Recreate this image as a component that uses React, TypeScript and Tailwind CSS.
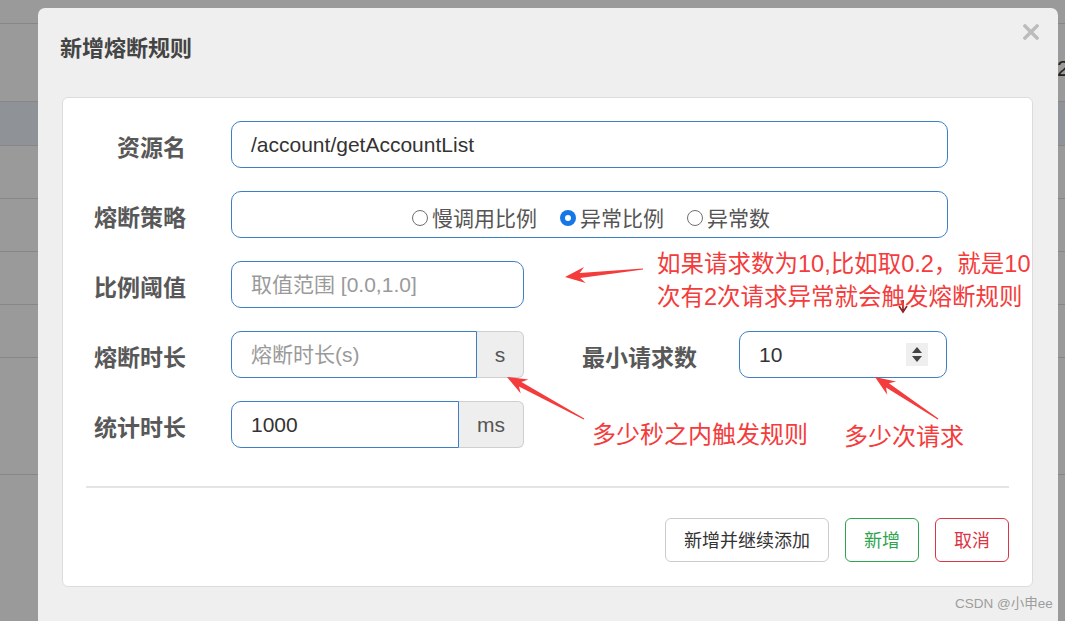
import React from 'react';

const font = "font-['Liberation_Sans','Noto_Sans_CJK_SC',sans-serif]";

type Pt = [number, number];

const Arrow = ({ tail, tip }: { tail: Pt; tip: Pt }) => {
  const dx = tip[0] - tail[0];
  const dy = tip[1] - tail[1];
  const len = Math.hypot(dx, dy);
  const ux = dx / len;
  const uy = dy / len;
  const nx = -uy;
  const ny = ux;
  const headLen = 20;
  const headW = 8;
  const neck: Pt = [tip[0] - ux * headLen * 0.75, tip[1] - uy * headLen * 0.75];
  const base: Pt = [tip[0] - ux * headLen, tip[1] - uy * headLen];
  const pts: Pt[] = [
    [tail[0] + nx * 0.6, tail[1] + ny * 0.6],
    [neck[0] + nx * 2.6, neck[1] + ny * 2.6],
    [base[0] + nx * headW, base[1] + ny * headW],
    tip,
    [base[0] - nx * headW, base[1] - ny * headW],
    [neck[0] - nx * 2.6, neck[1] - ny * 2.6],
    [tail[0] - nx * 0.6, tail[1] - ny * 0.6],
  ];
  return <polygon points={pts.map((p) => p.join(',')).join(' ')} fill="#f43c3c" />;
};

const Label = ({ children }: { children: React.ReactNode }) => (
  <div className="w-[123px] shrink-0 mt-[8px] text-right text-[23px] font-bold text-[#585858] leading-none">{children}</div>
);

const Radio = ({ checked, label }: { checked?: boolean; label: string }) => (
  <div className="flex items-center gap-[4px]">
    {checked ? (
      <span className="w-[16px] h-[16px] rounded-full bg-[#1677e6] flex items-center justify-center">
        <span className="w-[6px] h-[6px] rounded-full bg-white" />
      </span>
    ) : (
      <span className="w-[16px] h-[16px] rounded-full border-[1.5px] border-[#6f6f6f] bg-white" />
    )}
    <span className="text-[21px] text-[#555] leading-none">{label}</span>
  </div>
);

export default function App() {
  const rowLines = [24, 78, 44, 53, 53, 53, 53, 117];
  return (
    <div className={`relative w-[1065px] h-[621px] overflow-hidden bg-[#9a9a9a] ${font}`}>
      {/* page behind the dialog */}
      <div className="flex flex-col">
        {rowLines.map((h, i) => (
          <div
            key={i}
            style={{ height: h }}
            className={`border-b border-[#878787] ${i === 2 ? 'bg-[#8f9296]' : ''}`}
          />
        ))}
      </div>
      <div className="absolute left-[1057px] top-[58px] text-[22px] text-[#222] leading-none">2</div>

      {/* dialog */}
      <div className="absolute left-[38px] top-[8px] w-[1020px] h-[660px] bg-[#efefef] rounded-t-[7px]">
        <div className="relative h-[89px] px-[22px] pt-[24px]">
          <h2 className="text-[22px] font-bold text-[#444] leading-[34px]">新增熔断规则</h2>
          <svg className="absolute right-[19px] top-[16px]" width="16" height="16" viewBox="0 0 16 16">
            <path d="M2 2 L14 14 M14 2 L2 14" stroke="#bcbcbc" strokeWidth="3.4" strokeLinecap="square" />
          </svg>
        </div>

        <div className="ml-[24px] w-[971px] h-[490px] bg-white border border-[#dcdcdc] rounded-[6px] pt-[23px]">
          <div className="flex flex-col gap-[23px]">
            <div className="flex items-center h-[47px]">
              <Label>资源名</Label>
              <div className="ml-[45px] w-[717px] h-[47px] border border-[#3d7fc2] rounded-[10px] px-[19px] flex items-center text-[21px] text-[#333]">
                /account/getAccountList
              </div>
            </div>

            <div className="flex items-center h-[47px]">
              <Label>熔断策略</Label>
              <div className="ml-[45px] w-[717px] h-[47px] border border-[#3d7fc2] rounded-[10px] flex items-center justify-center gap-[23px] pl-[3px] pt-[7px]">
                <Radio label="慢调用比例" />
                <Radio checked label="异常比例" />
                <Radio label="异常数" />
              </div>
            </div>

            <div className="flex items-center h-[47px]">
              <Label>比例阈值</Label>
              <div className="ml-[45px] w-[293px] h-[47px] border border-[#3d7fc2] rounded-[10px] px-[19px] flex items-center text-[21px] text-[#9a9a9a]">
                取值范围 [0.0,1.0]
              </div>
            </div>

            <div className="flex items-center h-[47px]">
              <Label>熔断时长</Label>
              <div className="ml-[45px] flex h-[47px]">
                <div className="w-[246px] border border-[#3d7fc2] rounded-l-[10px] px-[19px] flex items-center text-[21px] text-[#9a9a9a]">
                  熔断时长(s)
                </div>
                <div className="w-[47px] bg-[#eeeeee] border border-l-0 border-[#cfcfcf] rounded-r-[6px] flex items-center justify-center text-[21px] text-[#555]">
                  s
                </div>
              </div>
              <div className="ml-[58px] mt-[8px] text-[23px] font-bold text-[#585858] leading-none">最小请求数</div>
              <div className="ml-[42px] w-[208px] h-[47px] border border-[#3d7fc2] rounded-[10px] pl-[19px] pr-[18px] flex items-center justify-between text-[21px] text-[#333]">
                <span>10</span>
                <span className="w-[22px] h-[23px] bg-[#efefef] flex flex-col items-center justify-center gap-[3px]">
                  <svg width="10" height="6" viewBox="0 0 10 6"><path d="M0 6 L5 0 L10 6 Z" fill="#444" /></svg>
                  <svg width="10" height="6" viewBox="0 0 10 6"><path d="M0 0 L5 6 L10 0 Z" fill="#444" /></svg>
                </span>
              </div>
            </div>

            <div className="flex items-center h-[47px]">
              <Label>统计时长</Label>
              <div className="ml-[45px] flex h-[47px]">
                <div className="w-[228px] border border-[#3d7fc2] rounded-l-[10px] px-[19px] flex items-center text-[21px] text-[#333]">
                  1000
                </div>
                <div className="w-[65px] bg-[#eeeeee] border border-l-0 border-[#cfcfcf] rounded-r-[6px] flex items-center justify-center text-[21px] text-[#555]">
                  ms
                </div>
              </div>
            </div>
          </div>

          <div className="mx-[23px] mt-[38px] h-[2px] bg-[#e4e4e4]" />

          <div className="mt-[30px] pr-[23px] flex justify-end gap-[16px]">
            <button className="w-[164px] h-[44px] border border-[#cccccc] rounded-[6px] bg-white text-[18px] text-[#333] pt-[3px]">
              新增并继续添加
            </button>
            <button className="w-[74px] h-[44px] border border-[#2ea44f] rounded-[6px] bg-white text-[18px] text-[#2ea44f] pt-[3px]">
              新增
            </button>
            <button className="w-[74px] h-[44px] border border-[#dc3545] rounded-[6px] bg-white text-[18px] text-[#dc3545] pt-[3px]">
              取消
            </button>
          </div>
        </div>
      </div>

      {/* annotations */}
      <svg className="absolute left-0 top-0" width="1065" height="621" viewBox="0 0 1065 621">
        <Arrow tail={[643, 269]} tip={[565, 277]} />
        <Arrow tail={[584, 419]} tip={[507, 377]} />
        <Arrow tail={[938, 419]} tip={[875, 377]} />
        <path d="M903 300 L903 310 M899 306 L903 312 L907 306" stroke="#8a1f1f" strokeWidth="1.6" fill="none" />
      </svg>
      <div className="absolute left-[657px] top-[248px] text-[23.5px] leading-[33px] text-[#f43c3c] whitespace-nowrap">
        <div>如果请求数为10,比如取0.2，就是10</div>
        <div>次有2次请求异常就会触发熔断规则</div>
      </div>
      <div className="absolute left-[592px] top-[420px] text-[24px] leading-[30px] text-[#f43c3c] whitespace-nowrap">
        多少秒之内触发规则
      </div>
      <div className="absolute left-[844px] top-[422px] text-[24px] leading-[30px] text-[#f43c3c] whitespace-nowrap">
        多少次请求
      </div>
      <div className="absolute left-[955px] top-[597px] text-[13.5px] text-[#9d9d9d] leading-none">CSDN @小申ee</div>
    </div>
  );
}
